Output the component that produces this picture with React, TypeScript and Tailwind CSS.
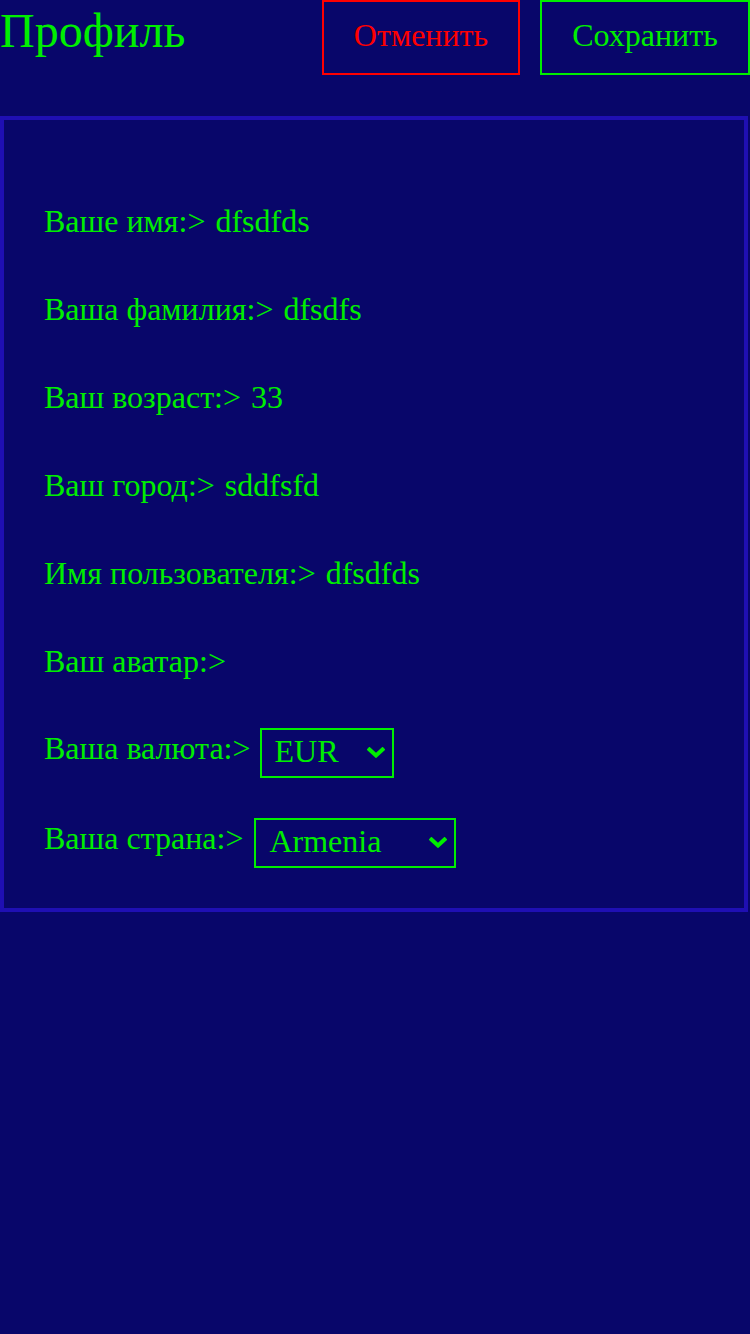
import { useState } from "react";

// One flat profile form, neon-on-navy. Everything is Liberation Serif,
// since the reference is plainly Times-metric text.
const FONT = "font-['Liberation_Serif','Times_New_Roman',serif]";

const FIELDS: [string, string][] = [
  ["Ваше имя:>", "dfsdfds"],
  ["Ваша фамилия:>", "dfsdfs"],
  ["Ваш возраст:>", "33"],
  ["Ваш город:>", "sddfsfd"],
  ["Имя пользователя:>", "dfsdfds"],
  ["Ваш аватар:>", ""],
];

const CURRENCIES = ["EUR", "USD", "RUB", "AMD"];
const COUNTRIES = ["Armenia", "Russia", "Georgia", "France"];

function Chevron() {
  return (
    <svg width="18" height="11" viewBox="0 0 18 11" aria-hidden>
      <polyline points="2.5,2.5 9,8.5 15.5,2.5" fill="none" stroke="#00ee00" strokeWidth="4" strokeLinecap="square" />
    </svg>
  );
}

function Picker({
  value,
  options,
  onChange,
  className,
}: {
  value: string;
  options: string[];
  onChange: (v: string) => void;
  className: string;
}) {
  return (
    <span className={`relative block shrink-0 ${className}`}>
      <select
        value={value}
        onChange={(e) => onChange(e.target.value)}
        className="appearance-none block w-full h-[50px] border-2 border-[#00ee00] bg-[#08066a] pl-[13px] pr-8 pt-[2px] pb-[6px] leading-[normal] text-[32px] text-[#00ee00] outline-none"
      >
        {options.map((o) => (
          <option key={o} value={o}>
            {o}
          </option>
        ))}
      </select>
      <span className="pointer-events-none absolute right-[9px] top-[19px] flex">
        <Chevron />
      </span>
    </span>
  );
}

export default function App() {
  const [currency, setCurrency] = useState("EUR");
  const [country, setCountry] = useState("Armenia");

  return (
    <div className={`min-h-[1334px] w-[750px] bg-[#08066a] text-[#00ee00] ${FONT}`}>
      <div className="flex items-start">
        <h1 className="pt-[3px] text-[48px] leading-[normal] font-normal">Профиль</h1>
        <div className="ml-auto flex gap-[20px]">
          <button
            type="button"
            className="h-[75px] w-[198px] pb-[4px] border-2 border-[#ff0000] text-[32px] leading-[normal] text-[#ff0000]"
          >
            Отменить
          </button>
          <button
            type="button"
            className="h-[75px] w-[210px] pb-[4px] border-2 border-[#00ee00] text-[32px] leading-[normal] text-[#00ee00]"
          >
            Сохранить
          </button>
        </div>
      </div>

      <div className="mt-[41px] w-[748px] h-[796px] border-4 border-[#1f0fb3] pl-[40px] pt-[83px] pb-[40px] text-[32px] leading-[normal]">
        <div className="flex flex-col gap-[51px]">
          {FIELDS.map(([label, value]) => (
            <div key={label}>
              {label} <span className="ml-[2px]">{value}</span>
            </div>
          ))}
        </div>
        <div className="mt-[48px] flex items-start">
          <span className="pt-[2px]">Ваша валюта:&gt;</span>
          <Picker value={currency} options={CURRENCIES} onChange={setCurrency} className="ml-[9px] w-[134px]" />
        </div>
        <div className="mt-[40px] flex items-start">
          <span className="pt-[2px]">Ваша страна:&gt;</span>
          <Picker value={country} options={COUNTRIES} onChange={setCountry} className="ml-[11px] w-[202px]" />
        </div>
      </div>
    </div>
  );
}
